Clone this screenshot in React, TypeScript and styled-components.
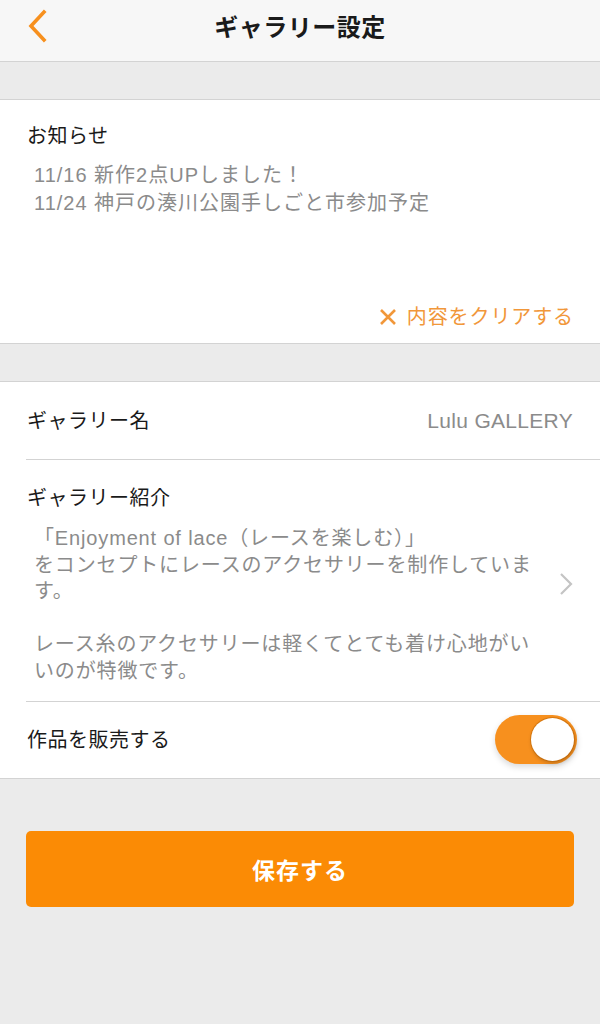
import React, { useState } from 'react';
import styled, { createGlobalStyle } from 'styled-components';

const colors = {
  orange: '#f7901e',
  orangeButton: '#fb8b05',
  orangeText: '#f1973a',
  bg: '#ebebeb',
  navBg: '#f7f7f7',
  border: '#d3d3d3',
  text: '#1a1a1a',
  sub: '#8b8b8b',
};

const GlobalStyle = createGlobalStyle`
  body {
    margin: 0;
    background: ${colors.bg};
    font-family: "Liberation Sans", "Noto Sans CJK JP", sans-serif;
    color: ${colors.text};
  }
`;

const Page = styled.div`
  min-height: 1024px;
  background: ${colors.bg};
  display: flex;
  flex-direction: column;
`;

const NavBar = styled.header`
  height: 61px;
  background: ${colors.navBg};
  border-bottom: 1px solid ${colors.border};
  display: flex;
  align-items: center;
  justify-content: center;
  position: relative;
`;

const BackButton = styled.button`
  position: absolute;
  left: 20px;
  top: 6px;
  width: 34px;
  height: 40px;
  border: none;
  background: none;
  padding: 0;
  display: flex;
  align-items: center;
  justify-content: center;
  cursor: pointer;
`;

const Title = styled.h1`
  margin: 0 0 10px;
  font-size: 24px;
  font-weight: 700;
  letter-spacing: 0.5px;
`;

const Gap = styled.div`
  height: 37px;
`;

const Section = styled.section`
  background: #fff;
  border-top: 1px solid ${colors.border};
  border-bottom: 1px solid ${colors.border};
`;

const NoticeBox = styled.div`
  padding: 22px 27px 12px;
  display: flex;
  flex-direction: column;
`;

const Label = styled.div`
  font-size: 20px;
  line-height: 28px;
  letter-spacing: 0.5px;
`;

const NoticeText = styled.div`
  margin-top: 11px;
  padding-left: 7px;
  min-height: 142px;
  font-size: 20px;
  line-height: 28px;
  color: ${colors.sub};
  letter-spacing: 1px;
`;

const ClearButton = styled.button`
  align-self: flex-end;
  display: flex;
  align-items: center;
  gap: 10px;
  border: none;
  background: none;
  padding: 0;
  margin-right: -1px;
  font-family: inherit;
  font-size: 20px;
  line-height: 28px;
  letter-spacing: 0.9px;
  color: ${colors.orangeText};
  cursor: pointer;
`;

const Row = styled.div<{ last?: boolean }>`
  margin-left: 26px;
  padding-right: 27px;
  border-bottom: ${(p) => (p.last ? 'none' : `1px solid ${colors.border}`)};
  display: flex;
  align-items: center;
  justify-content: space-between;
`;

const NameRow = styled(Row)`
  height: 77px;
  padding-left: 1px;
`;

const ToggleRow = styled(Row)`
  height: 76px;
  padding-left: 1px;
  padding-right: 23px;
`;

const Value = styled.div`
  font-size: 21px;
  color: ${colors.sub};
  letter-spacing: 0.3px;
`;

const IntroRow = styled(Row)`
  padding: 24px 27px 16px 1px;
`;

const IntroBody = styled.div`
  display: flex;
  flex-direction: column;
`;

const IntroText = styled.div`
  margin-top: 13px;
  padding-left: 7px;
  font-size: 20px;
  line-height: 26.6px;
  color: ${colors.sub};
  letter-spacing: 0.85px;
  p {
    margin: 0 0 26.6px;
  }
  p:last-child {
    margin-bottom: 0;
  }
`;

const Chevron = styled.div`
  display: flex;
  align-items: center;
`;

const Switch = styled.button<{ on: boolean }>`
  width: 82px;
  height: 49px;
  border-radius: 25px;
  border: none;
  padding: 3px;
  background: ${(p) => (p.on ? colors.orange : '#e4e4e4')};
  display: flex;
  justify-content: ${(p) => (p.on ? 'flex-end' : 'flex-start')};
  align-items: center;
  cursor: pointer;
  box-shadow: 0 3px 6px rgba(0, 0, 0, 0.15);
`;

const Knob = styled.span`
  width: 43px;
  height: 43px;
  border-radius: 50%;
  background: #fff;
  box-shadow: 0 0 0 1px rgba(190, 100, 0, 0.5), 1px 2px 4px rgba(0, 0, 0, 0.25);
`;

const Footer = styled.div`
  padding: 52px 26px 0 26px;
`;

const SaveButton = styled.button`
  width: 100%;
  height: 76px;
  border: none;
  border-radius: 5px;
  background: ${colors.orangeButton};
  color: #fff;
  font-family: inherit;
  font-size: 23px;
  font-weight: 700;
  letter-spacing: 1px;
  cursor: pointer;
`;

const App: React.FC = () => {
  const [selling, setSelling] = useState(true);

  return (
    <Page>
      <GlobalStyle />
      <NavBar>
        <BackButton aria-label="戻る">
          <svg width="22" height="34" viewBox="0 0 22 34">
            <path d="M18 3 L5 17 L18 31" fill="none" stroke={colors.orange} strokeWidth="3.6" strokeLinecap="square" />
          </svg>
        </BackButton>
        <Title>ギャラリー設定</Title>
      </NavBar>
      <Gap />
      <Section>
        <NoticeBox>
          <Label>お知らせ</Label>
          <NoticeText>
            11/16 新作2点UPしました！
            <br />
            11/24 神戸の湊川公園手しごと市参加予定
          </NoticeText>
          <ClearButton>
            <svg width="18" height="18" viewBox="0 0 18 18">
              <path d="M2 2 L16 16 M16 2 L2 16" stroke={colors.orangeText} strokeWidth="2.6" />
            </svg>
            内容をクリアする
          </ClearButton>
        </NoticeBox>
      </Section>
      <Gap />
      <Section>
        <NameRow>
          <Label>ギャラリー名</Label>
          <Value>Lulu GALLERY</Value>
        </NameRow>
        <IntroRow>
          <IntroBody>
            <Label>ギャラリー紹介</Label>
            <IntroText>
              <p>
                「Enjoyment of lace（レースを楽しむ）」
                <br />
                をコンセプトにレースのアクセサリーを制作していま
                <br />
                す。
              </p>
              <p>
                レース糸のアクセサリーは軽くてとても着け心地がい
                <br />
                いのが特徴です。
              </p>
            </IntroText>
          </IntroBody>
          <Chevron>
            <svg width="14" height="24" viewBox="0 0 14 24">
              <path d="M2 2 L12 12 L2 22" fill="none" stroke="#c4c4c4" strokeWidth="2.2" />
            </svg>
          </Chevron>
        </IntroRow>
        <ToggleRow last>
          <Label>作品を販売する</Label>
          <Switch on={selling} onClick={() => setSelling(!selling)} aria-label="作品を販売する">
            <Knob />
          </Switch>
        </ToggleRow>
      </Section>
      <Footer>
        <SaveButton>保存する</SaveButton>
      </Footer>
    </Page>
  );
};

export default App;
